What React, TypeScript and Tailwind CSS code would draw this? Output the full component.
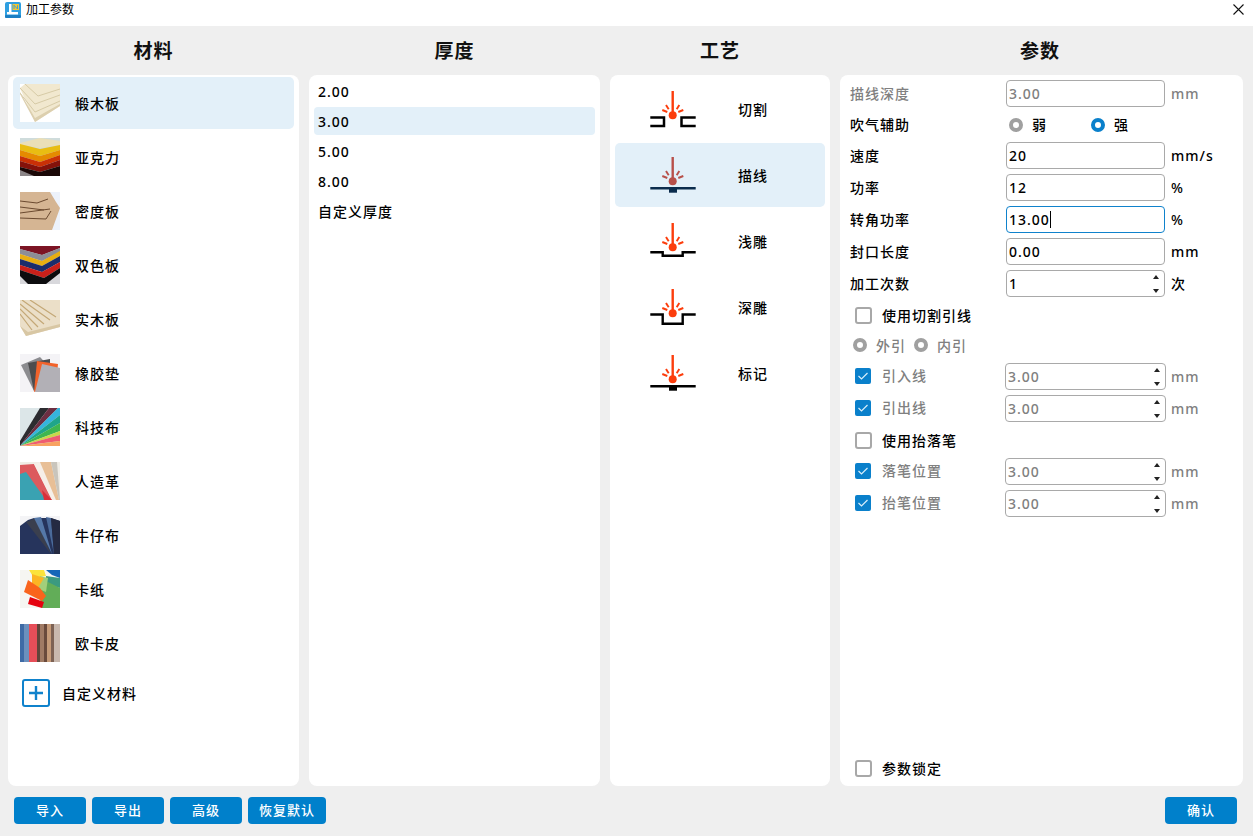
import type { ReactNode } from "react";

const FONT = "[font-family:'Noto_Sans','Noto_Sans_CJK_SC',sans-serif]";

// little material swatches, hand drawn from the reference
function Thumb({ bg, children }: { bg: string; children: ReactNode }) {
  return (
    <svg width="40" height="38" viewBox="0 0 40 38" className="shrink-0 block">
      <rect width="40" height="38" fill={bg} />
      {children}
    </svg>
  );
}

const swatches: Record<string, ReactNode> = {
  椴木板: (
    <Thumb bg="#ffffff">
      <polygon points="0,4 5,0 40,0 40,22 15,38" fill="#f1e8cf" />
      <path d="M5 0 L18 12 L40 5 M0 4 L15 20 L40 11 M0 9 L15 28 L40 17" stroke="#d6caa6" strokeWidth="1" fill="none" />
      <polygon points="0,8 15,34 40,20 40,22 15,38 0,10" fill="#dccfae" />
    </Thumb>
  ),
  亚克力: (
    <Thumb bg="#cfdcdc">
      <polygon points="0,5 20,0 40,3 40,7 20,10 0,7" fill="#eadfb8" />
      <polygon points="0,6 20,11 40,7 40,12 20,18 0,12" fill="#e9bd12" />
      <polygon points="0,12 20,18 40,12 40,17 20,24 0,18" fill="#e58a00" />
      <polygon points="0,18 20,24 40,17 40,22 20,29 0,23" fill="#c93006" />
      <polygon points="0,23 20,29 40,22 40,28 20,34 0,29" fill="#84120a" />
      <polygon points="0,29 20,34 40,28 40,38 0,38" fill="#1a0807" />
      <polygon points="0,32 14,38 0,38" fill="#8c8688" />
    </Thumb>
  ),
  密度板: (
    <Thumb bg="#edf2fb">
      <polygon points="0,0 30,0 36,10 40,16 32,38 0,38" fill="#d5b593" />
      <path d="M0 9 L17 11 L28 7 M0 15 L24 18 M0 21 L30 17 M0 26 L26 27 L31 19" stroke="#6b4a30" strokeWidth="1" fill="none" />
    </Thumb>
  ),
  双色板: (
    <Thumb bg="#d8d8dc">
      <polygon points="0,0 40,0 40,2 22,9 0,3" fill="#7c1424" />
      <polygon points="0,3 22,9 40,2 40,6 22,15 0,8" fill="#8d8e96" />
      <polygon points="0,8 22,15 40,5 40,10 22,20 0,13" fill="#e8ae12" />
      <polygon points="0,13 22,20 40,10 40,16 22,26 0,19" fill="#1b2d6b" />
      <polygon points="0,19 22,26 40,16 40,22 24,32 0,24" fill="#c8201a" />
      <polygon points="0,24 24,32 40,22 40,27 26,38 8,38 0,30" fill="#0c0c0e" />
    </Thumb>
  ),
  实木板: (
    <Thumb bg="#ffffff">
      <polygon points="0,0 40,0 40,27 6,36 0,26" fill="#ebdfc8" />
      <path d="M2 0 L30 20 M0 4 L24 24 M0 9 L18 27 M0 14 L12 30 M10 0 L36 17" stroke="#c4a877" strokeWidth="1.2" fill="none" />
      <polygon points="0,26 6,36 40,27 40,24 8,32" fill="#d8c7a4" />
    </Thumb>
  ),
  橡胶垫: (
    <Thumb bg="#f4f3f6">
      <polygon points="1,11 20,3 32,16 14,37" fill="#8c8c90" />
      <polygon points="8,9 30,5 30,20 14,37" fill="#4c4c4e" />
      <polygon points="17,7 38,10 36,30 14,38" fill="#f2622a" />
      <polygon points="22,10 40,14 40,38 15,38" fill="#b2b0b6" />
    </Thumb>
  ),
  科技布: (
    <Thumb bg="#dce6e8">
      <polygon points="0,38 0,33 20,0 29,0" fill="#2c2c30" />
      <polygon points="0,38 29,0 38,0" fill="#6c2e42" />
      <polygon points="0,38 38,0 40,0 40,7" fill="#35b4dc" />
      <polygon points="0,38 40,7 40,15" fill="#1fa58a" />
      <polygon points="0,38 40,15 40,23" fill="#3fb64f" />
      <polygon points="0,38 40,23 40,27" fill="#c9d84a" />
      <polygon points="0,38 40,27 40,33" fill="#ef5c70" />
      <polygon points="0,38 40,33 40,38" fill="#f8a260" />
    </Thumb>
  ),
  人造革: (
    <Thumb bg="#f0ede6">
      <polygon points="0,3 14,2 32,38 0,38" fill="#dc5a5e" />
      <polygon points="0,12 6,10 26,38 0,38" fill="#3aa2b2" />
      <polygon points="14,2 20,0 36,38 32,38" fill="#f6efe8" />
      <polygon points="20,0 31,0 39,38 36,38" fill="#e8bf96" />
      <polygon points="31,0 37,0 40,38 39,38" fill="#c9c5bc" />
      <polygon points="22,28 32,38 24,38" fill="#d8303a" />
    </Thumb>
  ),
  牛仔布: (
    <Thumb bg="#f4f4f6">
      <polygon points="0,10 8,4 14,2 31,2 40,5 40,38 0,38" fill="#26345c" />
      <polygon points="6,6 16,2 31,38" fill="#3a3f4e" />
      <polygon points="14,2 21,1 32,38" fill="#5578a8" />
      <polygon points="26,1 31,2 34,38" fill="#4a6a9a" />
      <polygon points="31,2 40,5 40,38 34,38" fill="#252a42" />
    </Thumb>
  ),
  卡纸: (
    <Thumb bg="#f6f6f2">
      <polygon points="26,0 40,0 40,8 32,5" fill="#1566b8" />
      <polygon points="9,0 24,0 26,6 14,8" fill="#fbe33c" />
      <polygon points="26,6 40,8 40,18 26,14" fill="#3b9a80" />
      <polygon points="28,12 40,18 40,38 22,38 18,20" fill="#62ad58" />
      <polygon points="20,6 28,8 26,22 16,18" fill="#a3cf7a" />
      <polygon points="12,4 24,8 18,18 12,14" fill="#fcb524" />
      <polygon points="8,10 20,18 26,26 22,31 4,22" fill="#f9641c" />
      <polygon points="10,27 24,32 22,38 8,34" fill="#e5020f" />
    </Thumb>
  ),
  欧卡皮: (
    <Thumb bg="#b9a89a">
      <rect x="0" width="4" height="38" fill="#3e6ba6" />
      <rect x="4" width="5" height="38" fill="#6b90bd" />
      <rect x="9" width="8" height="38" fill="#e64e58" />
      <rect x="17" width="3" height="38" fill="#61453a" />
      <rect x="20" width="4" height="38" fill="#a07a64" />
      <rect x="24" width="3" height="38" fill="#6a4a3c" />
      <rect x="27" width="4" height="38" fill="#c59a78" />
      <rect x="31" width="3" height="38" fill="#7d6254" />
      <rect x="34" width="6" height="38" fill="#c8b8ae" />
    </Thumb>
  ),
};

const materials = ["椴木板", "亚克力", "密度板", "双色板", "实木板", "橡胶垫", "科技布", "人造革", "牛仔布", "卡纸", "欧卡皮"];
const thickness = ["2.00", "3.00", "5.00", "8.00", "自定义厚度"];

function LaserIcon({ base, dim }: { base: ReactNode; dim?: boolean }) {
  const red = dim ? "#b8504a" : "#fc3d0c";
  return (
    <svg width="48" height="40" viewBox="0 0 48 40" className="shrink-0 block" fill="none">
      <path d="M23.7 2 V24" stroke={red} strokeWidth="2.4" />
      <circle cx="23.7" cy="26.2" r="4" fill={red} />
      <g stroke={red} strokeWidth="1.9">
        <path d="M17 16 L19.7 20.3" />
        <path d="M30.3 16 L27.7 20.3" />
        <path d="M13.3 21 L18.3 23" />
        <path d="M34.3 21 L29.3 23" />
      </g>
      {base}
    </svg>
  );
}

const K = "#000000";
const processes: { name: string; base: (c: string) => ReactNode }[] = [
  {
    name: "切割",
    base: (c) => <path d="M1.3 28.5 H15 V37 H1.3 M46.7 28.5 H32.5 V37 H46.7" stroke={c} strokeWidth="2.5" />,
  },
  {
    name: "描线",
    base: (c) => (
      <>
        <path d="M1.3 33.3 H46.7" stroke={c} strokeWidth="2.4" />
        <rect x="20" y="33" width="8" height="4.7" fill={c} />
      </>
    ),
  },
  {
    name: "浅雕",
    base: (c) => <path d="M1.3 31.3 H13.7 V34.7 H33.7 V31.3 H46.7" stroke={c} strokeWidth="2.4" />,
  },
  {
    name: "深雕",
    base: (c) => <path d="M1.3 27.5 H13.7 V36.7 H33.7 V27.5 H46.7" stroke={c} strokeWidth="2.4" />,
  },
  {
    name: "标记",
    base: (c) => (
      <>
        <path d="M1.3 33.3 H46.7" stroke={c} strokeWidth="2.4" />
        <rect x="20" y="33" width="8" height="4.7" fill={c} />
      </>
    ),
  },
];

function Spin() {
  return (
    <div className="flex flex-col justify-between h-[18px] mr-[5px] shrink-0">
      <svg width="6" height="4" viewBox="0 0 6 4" className="block"><polygon points="3,0 6,4 0,4" fill="#222" /></svg>
      <svg width="6" height="4" viewBox="0 0 6 4" className="block"><polygon points="0,0 6,0 3,4" fill="#222" /></svg>
    </div>
  );
}

function Field({
  value,
  muted,
  focus,
  spin,
  wide,
}: {
  value: string;
  muted?: boolean;
  focus?: boolean;
  spin?: boolean;
  wide?: boolean;
}) {
  return (
    <div
      className={`h-[27px] flex items-center justify-between rounded-[4px] border bg-white pl-[2px] ${
        wide ? "w-[161px]" : "w-[159px]"
      } ${focus ? "border-[#0f82cc]" : "border-[#a9a9a9]"}`}
    >
      <div className={`flex items-center font-medium ${muted ? "text-[#808080]" : "text-black"}`}>
        {value}
        {focus && <span className="w-px h-[17px] bg-black" />}
      </div>
      {spin && <Spin />}
    </div>
  );
}

function ParamRow({
  label,
  value,
  unit,
  muted,
  focus,
  spin,
}: {
  label: string;
  value: string;
  unit: string;
  muted?: boolean;
  focus?: boolean;
  spin?: boolean;
}) {
  return (
    <div className="flex items-center h-[27px] mb-[5px]">
      <span className={`w-[156px] font-medium ${muted ? "text-[#808080]" : "text-black"}`}>{label}</span>
      <Field value={value} muted={muted} focus={focus} spin={spin} />
      <span className={`ml-[6px] font-medium ${muted ? "text-[#808080]" : "text-black"}`}>{unit}</span>
    </div>
  );
}

function Radio({ on }: { on?: boolean }) {
  return (
    <span
      className={`w-[14px] h-[14px] rounded-full bg-white border-[4px] shrink-0 ${
        on ? "border-[#0a80cb]" : "border-[#a0a0a0]"
      }`}
    />
  );
}

function Check({ on }: { on?: boolean }) {
  if (on) {
    return (
      <span className="w-4 h-4 mb-[2px] rounded-[2px] bg-[#0a80cb] flex items-center justify-center shrink-0">
        <svg width="12" height="10" viewBox="0 0 12 10" fill="none">
          <path d="M1.5 5 L4.5 8 L10.5 2" stroke="#d8eefb" strokeWidth="1.2" />
        </svg>
      </span>
    );
  }
  return <span className="w-[17px] h-[17px] rounded-[3px] border-2 border-[#a8a8a8] bg-white shrink-0" />;
}

function CheckField({ label, className }: { label: string; className: string }) {
  return (
    <div className={`flex items-center h-[27px] pl-[5px] ${className}`}>
      <Check on />
      <span className="ml-[11px] mb-[2px] w-[123px] font-medium text-[#808080]">{label}</span>
      <Field value="3.00" muted spin wide />
      <span className="ml-[5px] font-medium text-[#808080]">mm</span>
    </div>
  );
}

function CheckLine({ label, className }: { label: string; className: string }) {
  return (
    <div className={`flex items-center h-[26px] pl-[5px] ${className}`}>
      <Check />
      <span className="ml-[10px] font-medium text-black">{label}</span>
    </div>
  );
}

function Btn({ label, w }: { label: string; w: string }) {
  return (
    <button className={`h-[27px] ${w} rounded-[4px] bg-[#0080cb] text-white text-[13px] font-medium`}>{label}</button>
  );
}

function Heading({ children, w }: { children: string; w: string }) {
  return (
    <div className={`${w} h-[49px] pt-[2px] flex items-center justify-center text-[19px] tracking-[1px] font-bold text-[#111]`}>
      {children}
    </div>
  );
}

export default function App() {
  return (
    <div className={`${FONT} w-[1253px] h-[836px] bg-[#efefef] flex flex-col text-[14px] tracking-[1px] overflow-hidden`}>
      {/* title bar */}
      <div className="h-[26px] bg-white flex items-start pt-[2px] pl-[5px] pr-[9px] shrink-0">
        <svg width="16" height="16" viewBox="0 0 16 16" className="shrink-0">
          <rect width="16" height="16" rx="2" fill="#2f9fe0" />
          <rect y="13" width="16" height="3" rx="1" fill="#1b7fc4" />
          <path d="M2 10 H13 V12.5 H2 Z M4 2 H6.5 V10 H4 Z" fill="#ffffff" />
          <rect x="7.5" y="2" width="6.5" height="6" fill="#f4c531" />
          <path d="M9 7 V3.2 L12.5 7 V3.2" stroke="#2f9fe0" strokeWidth="0.9" fill="none" />
        </svg>
        <span className="ml-[5px] leading-[16px] text-[12px] tracking-normal font-normal text-black">加工参数</span>
        <svg width="11" height="11" viewBox="0 0 11 11" className="ml-auto mt-[2px]" fill="none">
          <path d="M0.5 0.5 L10.5 10.5 M10.5 0.5 L0.5 10.5" stroke="#111" strokeWidth="1.1" />
        </svg>
      </div>

      <div className="flex pl-2 gap-[10px] shrink-0">
        <Heading w="w-[291px]">材料</Heading>
        <Heading w="w-[291px]">厚度</Heading>
        <Heading w="w-[220px]">工艺</Heading>
        <Heading w="w-[400px]">参数</Heading>
      </div>

      <div className="flex pl-2 gap-[10px] h-[711px] shrink-0">
        {/* materials */}
        <div className="w-[291px] bg-white rounded-[8px] p-[2px_5px] flex flex-col">
          {materials.map((m, i) => (
            <div
              key={m}
              className={`h-[52px] rounded-[5px] flex items-center pl-[7px] shrink-0 ${i ? "mt-[2px]" : ""} ${
                i === 0 ? "bg-[#e3f0f9]" : ""
              }`}
            >
              {swatches[m]}
              <span className="ml-[15px] font-medium text-black">{m}</span>
            </div>
          ))}
          <div className="flex items-center h-[48px] pl-[9px]">
            <svg width="28" height="28" viewBox="0 0 28 28" fill="none" className="shrink-0">
              <rect x="1" y="1" width="26" height="26" rx="2" stroke="#0f82cc" strokeWidth="2" />
              <path d="M14 7 V21 M7 14 H21" stroke="#0f82cc" strokeWidth="2.4" />
            </svg>
            <span className="ml-[12px] font-medium text-black">自定义材料</span>
          </div>
        </div>

        {/* thickness */}
        <div className="w-[291px] bg-white rounded-[8px] px-[5px] pt-[2px] flex flex-col">
          {thickness.map((t, i) => (
            <div
              key={t}
              className={`h-[28px] rounded-[4px] flex items-center pl-1 mb-[2px] font-medium text-black ${
                i === 1 ? "bg-[#e3f0f9]" : ""
              }`}
            >
              {t}
            </div>
          ))}
        </div>

        {/* process */}
        <div className="w-[220px] bg-white rounded-[8px] px-[5px] pt-[2px] flex flex-col">
          {processes.map((p, i) => (
            <div
              key={p.name}
              className={`h-[64px] rounded-[5px] flex items-center pl-[34px] shrink-0 ${i ? "mt-[2px]" : ""} ${
                i === 1 ? "bg-[#e3f0f9]" : ""
              }`}
            >
              <LaserIcon dim={i === 1} base={p.base(i === 1 ? "#0b2c4d" : K)} />
              <span className="ml-[41px] font-medium text-black">{p.name}</span>
            </div>
          ))}
        </div>

        {/* params */}
        <div className="w-[403px] bg-white rounded-[8px] pl-[10px] pt-[5px] pb-[5px] flex flex-col">
          <ParamRow label="描线深度" value="3.00" unit="mm" muted />
          <div className="flex items-center h-[25px] mb-[5px] font-medium text-black">
            <span className="w-[159px]">吹气辅助</span>
            <Radio />
            <span className="ml-[9px] w-[59px]">弱</span>
            <Radio on />
            <span className="ml-[9px]">强</span>
          </div>
          <ParamRow label="速度" value="20" unit="mm/s" />
          <ParamRow label="功率" value="12" unit="%" />
          <ParamRow label="转角功率" value="13.00" unit="%" focus />
          <ParamRow label="封口长度" value="0.00" unit="mm" />
          <ParamRow label="加工次数" value="1" unit="次" spin />
          <CheckLine label="使用切割引线" className="mb-[4px]" />
          <div className="flex items-center h-[26px] pl-[3px] mb-[5px] font-medium text-[#808080]">
            <Radio />
            <span className="ml-[9px] w-[38px]">外引</span>
            <Radio />
            <span className="ml-[9px]">内引</span>
          </div>
          <CheckField label="引入线" className="mb-[5px]" />
          <CheckField label="引出线" className="mb-[5px]" />
          <CheckLine label="使用抬落笔" className="mb-[5px]" />
          <CheckField label="落笔位置" className="mb-[5px]" />
          <CheckField label="抬笔位置" className="" />
          <CheckLine label="参数锁定" className="mt-auto" />
        </div>
      </div>

      <div className="flex pl-[14px] pr-4 pt-[11px] gap-[6px]">
        <Btn label="导入" w="w-[72px]" />
        <Btn label="导出" w="w-[72px]" />
        <Btn label="高级" w="w-[72px]" />
        <Btn label="恢复默认" w="w-[78px]" />
        <div className="ml-auto">
          <Btn label="确认" w="w-[72px]" />
        </div>
      </div>
    </div>
  );
}
